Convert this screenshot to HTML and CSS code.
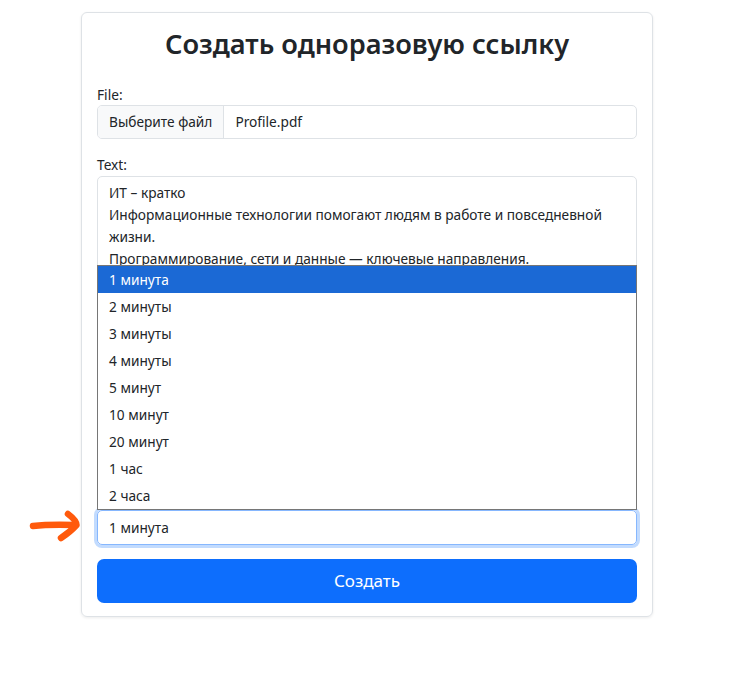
FILE: index.html
```html
<!DOCTYPE html>
<html lang="ru">
<head>
<meta charset="utf-8">
<title>Создать одноразовую ссылку</title>
<link rel="stylesheet" href="styles.css">
</head>
<body>
<div class="page">
  <form class="card">
    <h2 class="title">Создать одноразовую ссылку</h2>

    <label class="label">File:</label>
    <div class="file-input">
      <span class="file-btn">Выберите файл</span>
      <span class="file-name">Profile.pdf</span>
    </div>

    <label class="label label-gap">Text:</label>
    <textarea class="textarea">ИТ – кратко
Информационные технологии помогают людям в работе и повседневной
жизни.
Программирование, сети и данные — ключевые направления.</textarea>

    <div class="select-wrap">
      <div class="select">1 минута</div>
      <ul class="listbox">
        <li class="option selected">1 минута</li>
        <li class="option">2 минуты</li>
        <li class="option">3 минуты</li>
        <li class="option">4 минуты</li>
        <li class="option">5 минут</li>
        <li class="option">10 минут</li>
        <li class="option">20 минут</li>
        <li class="option">1 час</li>
        <li class="option">2 часа</li>
      </ul>
    </div>

    <button type="button" class="btn">Создать</button>
  </form>

  <svg class="arrow" viewBox="20 505 70 45" width="70" height="45" aria-hidden="true">
    <path d="M33 526 C46 524.5 60 524.5 75 525" />
    <path d="M68 514 C72 517 76.5 521 76.5 525 C72 530 67 534 61 538" />
  </svg>
</div>
</body>
</html>
```

FILE: styles.css
```css
* { box-sizing: border-box; }

html, body {
  margin: 0;
  padding: 0;
  background: #fff;
}

body {
  font-family: "Noto Sans", "Open Sans", sans-serif;
  color: #212529;
  font-size: 13.7px;
}

.page {
  position: relative;
  width: 748px;
  height: 676px;
  padding-top: 12px;
}

.card {
  width: 572px;
  margin-left: 81px;
  border: 1px solid #dee2e6;
  border-radius: 6px;
  box-shadow: 0 1px 3px rgba(0, 0, 0, 0.08);
  padding: 14px 15px 13px;
  display: flex;
  flex-direction: column;
}

.title {
  margin: 0 0 23px;
  font-size: 27.2px;
  font-weight: 600;
  line-height: 34px;
  text-align: center;
  color: #212529;
}

.label {
  display: block;
  font-size: 13.7px;
  line-height: 21px;
  margin: 0;
}

.label-gap {
  margin-top: 15px;
  margin-bottom: 1px;
}

.file-input {
  display: flex;
  height: 34px;
  border: 1px solid #dee2e6;
  border-radius: 5px;
  overflow: hidden;
  font-size: 13.7px;
  line-height: 32px;
}

.file-btn {
  background: #f8f9fa;
  border-right: 1px solid #dee2e6;
  padding: 0 11px;
}

.file-name {
  padding: 0 11px;
}

.textarea {
  display: block;
  width: 100%;
  height: 334px;
  margin-bottom: 0;
  resize: none;
  border: 1px solid #dee2e6;
  border-radius: 5px;
  padding: 5px 11px;
  font-family: inherit;
  font-size: 13.7px;
  line-height: 22px;
  color: #212529;
  overflow: hidden;
}

.select-wrap {
  position: relative;
}

.select {
  height: 35px;
  border: 1px solid #86b7fe;
  border-radius: 5px;
  box-shadow: 0 0 0 3px rgba(13, 110, 253, 0.25);
  padding: 0 11px;
  line-height: 33px;
  font-size: 13.7px;
}

.listbox {
  position: absolute;
  left: 0;
  right: 0;
  bottom: 35px;
  margin: 0;
  padding: 0;
  list-style: none;
  background: #fff;
  border: 1px solid #767676;
}

.option {
  height: 27px;
  line-height: 27px;
  padding: 0 11px;
  font-size: 13.7px;
  color: #212529;
}

.option.selected {
  background: #1b69d5;
  color: #fff;
}

.btn {
  margin-top: 14px;
  height: 44px;
  width: 100%;
  border: 0;
  border-radius: 7px;
  background: #0d6efd;
  color: #fff;
  font-family: inherit;
  font-size: 17px;
  line-height: 44px;
  padding: 0;
}

.arrow {
  position: absolute;
  left: 20px;
  top: 505px;
  fill: none;
  stroke: #ff5a0c;
  stroke-width: 6.5;
  stroke-linecap: round;
  stroke-linejoin: round;
}
```
